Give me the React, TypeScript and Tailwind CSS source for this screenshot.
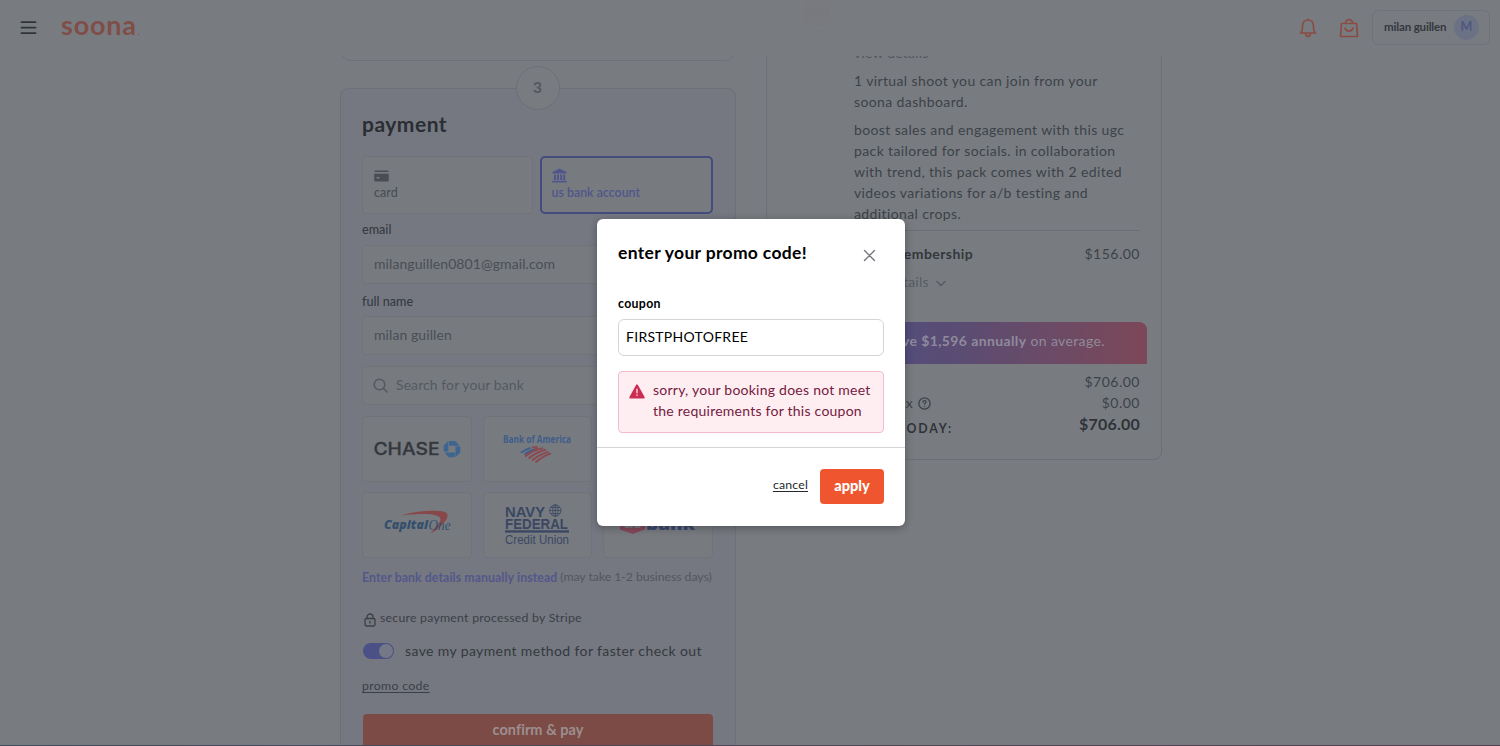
import React from "react";

function Field({ children, className = "" }: { children: React.ReactNode; className?: string }) {
  return (
    <div className={`flex items-center rounded-[4px] border border-[#6f747a] bg-[#777b80] px-[11px] pb-[3px] text-[14px] tracking-[0.08px] text-[#4a4e54] ${className}`}>
      {children}
    </div>
  );
}

function BankTile({ children }: { children?: React.ReactNode }) {
  return (
    <div className="flex h-[66px] items-center justify-center overflow-hidden rounded-[4px] border border-[#6f747a] bg-[#777b80]">
      {children}
    </div>
  );
}

function ChaseLogo() {
  return (
    <svg width="88" height="20" viewBox="0 0 88 20">
      <text x="0.500" y="15.800" fontFamily="Inter, sans-serif" fontWeight="500" fontSize="17" fill="#34383d" stroke="#34383d" strokeWidth="0.300" textLength="66" lengthAdjust="spacingAndGlyphs">CHASE</text>
      <g fill="#3c6590">
        <path d="M76 2h6.200l4.600 4.800H76z" />
        <path d="M87.300 7.600v6l-4.800 4.400V7.600z" />
        <path d="M82 18.200h-6.200l-4.400-4.800H82z" />
        <path d="M70.700 12.600v-6L75.300 2v10.600z" />
      </g>
    </svg>
  );
}

function BofaLogo() {
  return (
    <svg width="72" height="38" viewBox="0 0 72 38">
      <text x="2" y="13" fontFamily="'Open Sans', sans-serif" fontWeight="700" fontSize="10.500" fill="#3f5d8a" textLength="68" lengthAdjust="spacingAndGlyphs">Bank of America</text>
      <g fill="none" strokeWidth="1.900">
        <path d="M20 22.800q4-3.200 9.500-5M23.500 24.500q4-3.200 9.500-5" stroke="#3f5d8a" />
        <path d="M31 16.800q2.500 1.200 5.500.2M33.500 19.500l3-1.300" stroke="#8a4a50" />
        <path d="M24 26.500q8-6.500 18-8.200M27.500 28.500q8-6.500 17.500-8.700M31 30.500q8-6.500 16.500-8.700M34.500 32.500q7-6.500 15.500-9.200" stroke="#8a4a50" />
      </g>
    </svg>
  );
}

function CapitalOneLogo() {
  return (
    <svg className="-mt-1 ml-[2px]" width="68" height="26" viewBox="0 0 68 26">
      <path d="M17 5.500C32 1 50 0 59 1.500c8 1.500 5.500 8.500-7 19l-6 3c5-5 10-10 10.500-14C57 4 42 2.500 17 5.500z" fill="#88484a" />
      <text x="0" y="19" fontFamily="'Open Sans', sans-serif" fontWeight="800" fontStyle="italic" fontSize="11.500" fill="#34506c" textLength="44" lengthAdjust="spacingAndGlyphs">Capital</text>
      <text x="44.500" y="20" fontFamily="'Liberation Serif', serif" fontStyle="italic" fontSize="14.500" fill="#34506c" textLength="22" lengthAdjust="spacingAndGlyphs">One</text>
    </svg>
  );
}

function NavyFederalLogo() {
  return (
    <svg width="68" height="42" viewBox="0 0 68 42">
      <g fontFamily="'Liberation Sans', sans-serif" fill="#3a4763">
        <text x="2" y="12.500" fontWeight="700" fontSize="14.800" textLength="40" lengthAdjust="spacingAndGlyphs">NAVY</text>
        <text x="2" y="24.800" fontWeight="700" fontSize="14.800" textLength="63" lengthAdjust="spacingAndGlyphs">FEDERAL</text>
        <text x="2" y="40" fontSize="12" textLength="64" lengthAdjust="spacingAndGlyphs">Credit Union</text>
      </g>
      <rect x="2" y="26.300" width="64" height="2.300" fill="#3a4763" />
      <g fill="none" stroke="#3a4763" strokeWidth="0.800">
        <circle cx="52.300" cy="6.500" r="5.700" />
        <ellipse cx="52.300" cy="6.500" rx="2.700" ry="5.700" />
        <path d="M46.600 6.500h11.400M47.600 3.500h9.400M47.600 9.500h9.400M52.300 .8v11.400" />
      </g>
    </svg>
  );
}

function UsBankLogo() {
  return (
    <svg className="-mt-[3px]" width="78" height="26" viewBox="0 0 78 26">
      <path d="M1 3h25v15.500l-12.500 4.500L1 18.500z" fill="#85495a" />
      <text x="4" y="17" fontFamily="'Open Sans', sans-serif" fontWeight="800" fontSize="16" fill="#777b80">us</text>
      <text x="27" y="18.500" fontFamily="'Open Sans', sans-serif" fontWeight="800" fontSize="17" fill="#3b4872" textLength="49" lengthAdjust="spacingAndGlyphs">bank</text>
    </svg>
  );
}

function Header() {
  return (
    <header className="flex h-14 shrink-0 items-center justify-between pl-[20px] pr-[10px]">
      <div className="flex items-center">
        <svg width="17" height="16" viewBox="0 0 17 16" fill="none" stroke="#2f3439" strokeWidth="1.800" strokeLinecap="round">
          <path d="M1.500 2.200h14M1.500 7.700h14M1.500 13.200h14" />
        </svg>
        <div className="ml-6 -mt-[7px] h-8 text-[27px] font-bold leading-8 tracking-[0.800px] text-[#804e49]">soona</div>
        <span className="mt-[13px] ml-px h-px w-px bg-[#804e49]" />
      </div>
      <div className="flex items-center text-[#8b4b43]">
        <svg className="-mt-px" width="18" height="20" viewBox="0 0 18 20" fill="none" stroke="currentColor" strokeWidth="1.600" strokeLinejoin="round" strokeLinecap="round">
          <path d="M1.500 15c1.800-1.500 2-3.500 2-6.500C3.500 4.500 5.500 2 9 2s5.500 2.500 5.500 6.500c0 3 .2 5 2 6.500zM9 2V1M6.500 15c0 4.500 5 4.500 5 0" />
        </svg>
        <svg className="-mt-px ml-[22px]" width="20" height="20" viewBox="0 0 20 20" fill="none" stroke="currentColor" strokeWidth="1.700" strokeLinejoin="round" strokeLinecap="round">
          <path d="M2.500 5.500h15l1 13h-17zM6.500 5.500C6.500.2 13.500.2 13.500 5.500M6 10c1 4 7 4 8 0" />
        </svg>
        <div className="-mt-px ml-[13px] flex h-[35px] w-[118px] items-center justify-between rounded-[6px] border border-[#6f747b] pl-[11px] pr-[10px]">
          <span className="pb-[2px] text-[11.500px] font-bold tracking-[-0.150px] text-[#33373d]">milan guillen</span>
          <span className="flex h-[25px] w-[25px] items-center justify-center rounded-full bg-[#6b7286] pb-px text-[12.500px] font-bold text-[#50577f]">M</span>
        </div>
      </div>
    </header>
  );
}

function PaymentColumn() {
  return (
    <section className="w-[396px]">
      <div className="mx-[2px] -mt-4 h-[21px] rounded-b-[8px] border border-[#6c7177]" />
      <div className="mt-[27px] h-[700px] rounded-[8px] border border-[#6c7079] bg-[#757881] pl-[21px] pr-[22px]">
        <div className="mx-auto -mt-[23px] flex h-[44px] w-[44px] items-center justify-center rounded-full border border-[#6c7177] bg-[#787c81] pb-[2px] text-[16px] font-bold text-[#54585e]">3</div>
        <h2 className="h-7 text-[21px] font-bold leading-[27px] tracking-[0.500px] text-[#2a2e33]">payment</h2>

        <div className="mt-[18px] flex gap-[7px]">
          <div className="h-[58px] w-[171px] rounded-[4px] border border-[#70747a] bg-[#777b80] pl-[11px] pt-[13px] text-[#4a4e54]">
            <svg width="15" height="12" viewBox="0 0 15 12" fill="currentColor">
              <path d="M1 .5h13l.8 1.500H.2zM.2 3.800h14.600v6.400q0 1.300-1.300 1.300h-12Q.2 11.500.2 10.200zM2.500 7v1.500h3V7z" fillRule="evenodd" />
            </svg>
            <div className="mt-[3px] text-[12.600px] font-medium leading-[16px]">card</div>
          </div>
          <div className="h-[58px] w-[174px] rounded-[5px] border-2 border-[#434c7d] bg-[#777b80] pl-[10px] pt-[10px] text-[#50568b]">
            <svg width="15" height="15" viewBox="0 0 15 15" fill="currentColor">
              <path d="M7.500.5L14.500 4v1.500H.5V4zM2 6.500h2v5.500H2zM5 6.500h2v5.500H5zM8.200 6.500h2v5.500h-2zM11.200 6.500h2v5.500h-2zM.3 12.800h14.400v1.700H.3z" />
            </svg>
            <div className="mt-[2px] text-[12.400px] font-semibold leading-[16px]">us bank account</div>
          </div>
        </div>

        <div className="mt-[7px] h-[18px] text-[12.600px] font-medium leading-[18px] text-[#363a44]">email</div>
        <Field className="mt-[6px] h-[39px]">milanguillen0801@gmail.com</Field>
        <div className="mt-[9px] h-[18px] text-[12.600px] font-medium leading-[18px] text-[#363a44]">full name</div>
        <Field className="mt-[5px] h-[39px]">milan guillen</Field>
        <Field className="mt-[11px] h-[39px] text-[#55595f]">
          <svg className="-ml-px mr-2 mt-[2px]" width="15" height="15" viewBox="0 0 15 15" fill="none" stroke="currentColor" strokeWidth="1.500" strokeLinecap="round">
            <circle cx="6.500" cy="6.500" r="5.300" />
            <path d="M10.500 10.500l3.500 3.500" />
          </svg>
          Search for your bank
        </Field>

        <div className="mt-[11px] grid grid-cols-3 gap-x-[11px] gap-y-[10px]">
          <BankTile><ChaseLogo /></BankTile>
          <BankTile><BofaLogo /></BankTile>
          <BankTile />
          <BankTile><CapitalOneLogo /></BankTile>
          <BankTile><NavyFederalLogo /></BankTile>
          <BankTile><UsBankLogo /></BankTile>
        </div>

        <div className="mt-[9px] flex h-5 items-center gap-[3px] whitespace-nowrap text-[12.300px] leading-5 text-[#53565f]">
          <span className="pt-px font-bold tracking-[0.080px] text-[#535789]">Enter bank details manually instead</span>
          <span className="pb-px tracking-[-0.060px]">(may take 1-2 business days)</span>
        </div>

        <div className="mt-[21px] flex h-5 items-center pl-[2px] text-[12.300px] tracking-[0.240px] text-[#3b3f47]">
          <svg className="mr-[4px] mt-[3px]" width="12" height="14" viewBox="0 0 12 14" fill="none" stroke="currentColor" strokeWidth="1.300" strokeLinecap="round">
            <rect x="1" y="5.500" width="10" height="7.500" rx="1.500" />
            <path d="M3 5.500V4a3 3 0 016 0v1.500M6 8.500v1.500" />
          </svg>
          secure payment processed by Stripe
        </div>
        <div className="mt-[13px] flex h-5 items-center pl-px text-[14px] tracking-[0.380px] text-[#34383f]">
          <span className="mr-[11px] flex h-4 w-[31px] justify-end rounded-full bg-[#4b5185] p-[1px]">
            <span className="h-[14px] w-[14px] rounded-full bg-[#757986]" />
          </span>
          <span className="pb-[2px]">save my payment method for faster check out</span>
        </div>
        <div className="mt-[15px] h-5 text-[12.300px] leading-5 tracking-[0.320px] text-[#3b3f47] underline underline-offset-2">promo code</div>
        <button className="ml-px mt-[18px] h-[40px] w-[350px] rounded-[4px] bg-[#7c4b46] pb-[9px] text-[14.500px] font-bold tracking-[0.050px] text-[#9c8f8f]">confirm &amp; pay</button>
      </div>
    </section>
  );
}

function SummaryColumn() {
  return (
    <section className="-mt-4 flex h-[420px] w-[396px] flex-col rounded-b-[8px] border border-[#6b7076] text-[14px] leading-[21px] tracking-[0.380px] text-[#3d4248]">
      <div className="ml-[87px] mt-px">
        <div className="h-[21px] tracking-[0.200px] text-[#53575d]">view details</div>
        <p className="mt-[7px] whitespace-nowrap">1 virtual shoot you can join from your<br />soona dashboard.</p>
        <p className="mt-[7px] whitespace-nowrap">boost sales and engagement with this ugc<br />pack tailored for socials. in collaboration<br />with trend, this pack comes with 2 edited<br />videos variations for a/b testing and<br />additional crops.</p>
      </div>
      <div className="ml-[14px] mr-[21px] mt-[6px] border-t border-[#6b7076]" />
      <div className="ml-[87px] mr-[21px] mt-[12px] flex justify-between">
        <span className="font-bold text-[#33373c] tracking-[0.450px]">basic membership</span>
        <span className="tracking-[0.500px]">$156.00</span>
      </div>
      <div className="ml-[87px] mt-[7px] flex items-center gap-[7px] tracking-[0.220px] text-[#575b61]">
        view details
        <svg className="mt-[3px]" width="10" height="7" viewBox="0 0 10 7" fill="none" stroke="currentColor" strokeWidth="1.500" strokeLinecap="round"><path d="M1 1.500l4 4 4-4" /></svg>
      </div>
      <div className="mx-[14px] mt-[30px] h-[42px] rounded-t-[8px] bg-linear-to-r from-[#464f8c] via-[#5b4c72] to-[#7c4758] pt-[8px] pl-px text-center text-[#8f8a9c]">
        <b>members save $1,596 annually</b> on average.
      </div>
      <div className="ml-[21px] mr-[21px] mt-[7px] flex justify-between tracking-[0.500px]"><span>subtotal</span><span>$706.00</span></div>
      <div className="ml-[21px] mr-[21px] flex justify-between">
        <span className="flex w-[143px] items-center justify-end gap-[5px]">
          sales tax
          <svg className="mt-px" width="13" height="13" viewBox="0 0 13 13" fill="none" stroke="currentColor" strokeWidth="1.300" strokeLinecap="round">
            <circle cx="6.500" cy="6.500" r="5.600" />
            <path d="M5 5.200a1.500 1.500 0 113 0c0 1-1.500 1-1.500 2M6.500 9.300v.1" />
          </svg>
        </span>
        <span className="tracking-[0.500px]">$0.00</span>
      </div>
      <div className="ml-[21px] mr-[21px] flex justify-between font-bold text-[#2f3338]">
        <span className="w-[165px] whitespace-nowrap pt-[5px] text-right text-[12.300px] tracking-[1.850px]">TOTAL TODAY:</span>
        <span className="text-[16px] tracking-[0.200px]">$706.00</span>
      </div>
    </section>
  );
}

function PromoDialog() {
  return (
    <div className="absolute left-[597px] top-[219px] h-[307px] w-[308px] rounded-[6px] bg-white text-black shadow-[0_2px_8px_rgba(0,0,0,0.3)]">
      <div className="flex h-[228px] flex-col px-[21px] pt-[21px]">
        <div className="flex justify-between">
          <h3 className="h-[25px] whitespace-nowrap text-[17.500px] font-bold leading-[25px] tracking-[0.320px]">enter your promo code!</h3>
          <svg className="mr-[8px] mt-[9px]" width="13" height="13" viewBox="0 0 13 13" fill="none" stroke="#74787e" strokeWidth="1.400" strokeLinecap="round">
            <path d="M1.500 1.500l10 10M11.500 1.500l-10 10" />
          </svg>
        </div>
        <label className="mt-[30px] h-[18px] text-[12.300px] font-bold leading-[18px] tracking-[0.350px]">coupon</label>
        <div className="mt-[6px] flex h-[37px] shrink-0 items-center rounded-[6px] border border-[#d3d5d8] px-[7px] pb-[2px] text-[14px] tracking-[0.280px]">FIRSTPHOTOFREE</div>
        <div className="mt-[15px] flex h-[62px] shrink-0 rounded-[4px] border border-[#f3bccb] bg-[#ffeef1] pl-[10px] pt-[7px] text-[14px] leading-[21px] tracking-[0.240px] text-[#74203f]">
          <svg className="mr-2 mt-[5px] shrink-0" width="16" height="15" viewBox="0 0 16 15">
            <path d="M8 1.200L14.800 13.500H1.200z" fill="#cb2d53" stroke="#cb2d53" strokeWidth="1.800" strokeLinejoin="round" />
            <path d="M8 5.200v3.500M8 11v.2" stroke="#ffd5de" strokeWidth="1.400" strokeLinecap="round" />
          </svg>
          <p className="whitespace-nowrap">sorry, your booking does not meet<br />the requirements for this coupon</p>
        </div>
      </div>
      <div className="flex items-start justify-end gap-3 border-t border-[#d3d5d8] pr-[21px] pt-[21px]">
        <span className="pt-[6px] text-[12.300px] leading-[20px] tracking-[0.180px] text-[#25282c] underline underline-offset-2">cancel</span>
        <button className="h-[35px] w-[64px] rounded-[4px] bg-[#ef5630] pb-[2px] text-[14.500px] font-black text-white">apply</button>
      </div>
    </div>
  );
}

export default function App() {
  return (
    <div className="relative flex h-[746px] w-[1500px] flex-col overflow-hidden bg-[#787c81] font-['Lato',sans-serif]">
      <div className="absolute left-[803px] top-0 h-[26px] w-[28px] bg-[#80605f]/10 blur-[4px]" />
      <Header />
      <main className="flex min-h-0 flex-1 items-start gap-[30px] overflow-hidden pl-[340px]">
        <PaymentColumn />
        <SummaryColumn />
      </main>
      <div className="absolute bottom-0 left-0 h-px w-full bg-linear-to-r from-[#3f4d62] to-[#553f4e]" />
      <PromoDialog />
    </div>
  );
}
